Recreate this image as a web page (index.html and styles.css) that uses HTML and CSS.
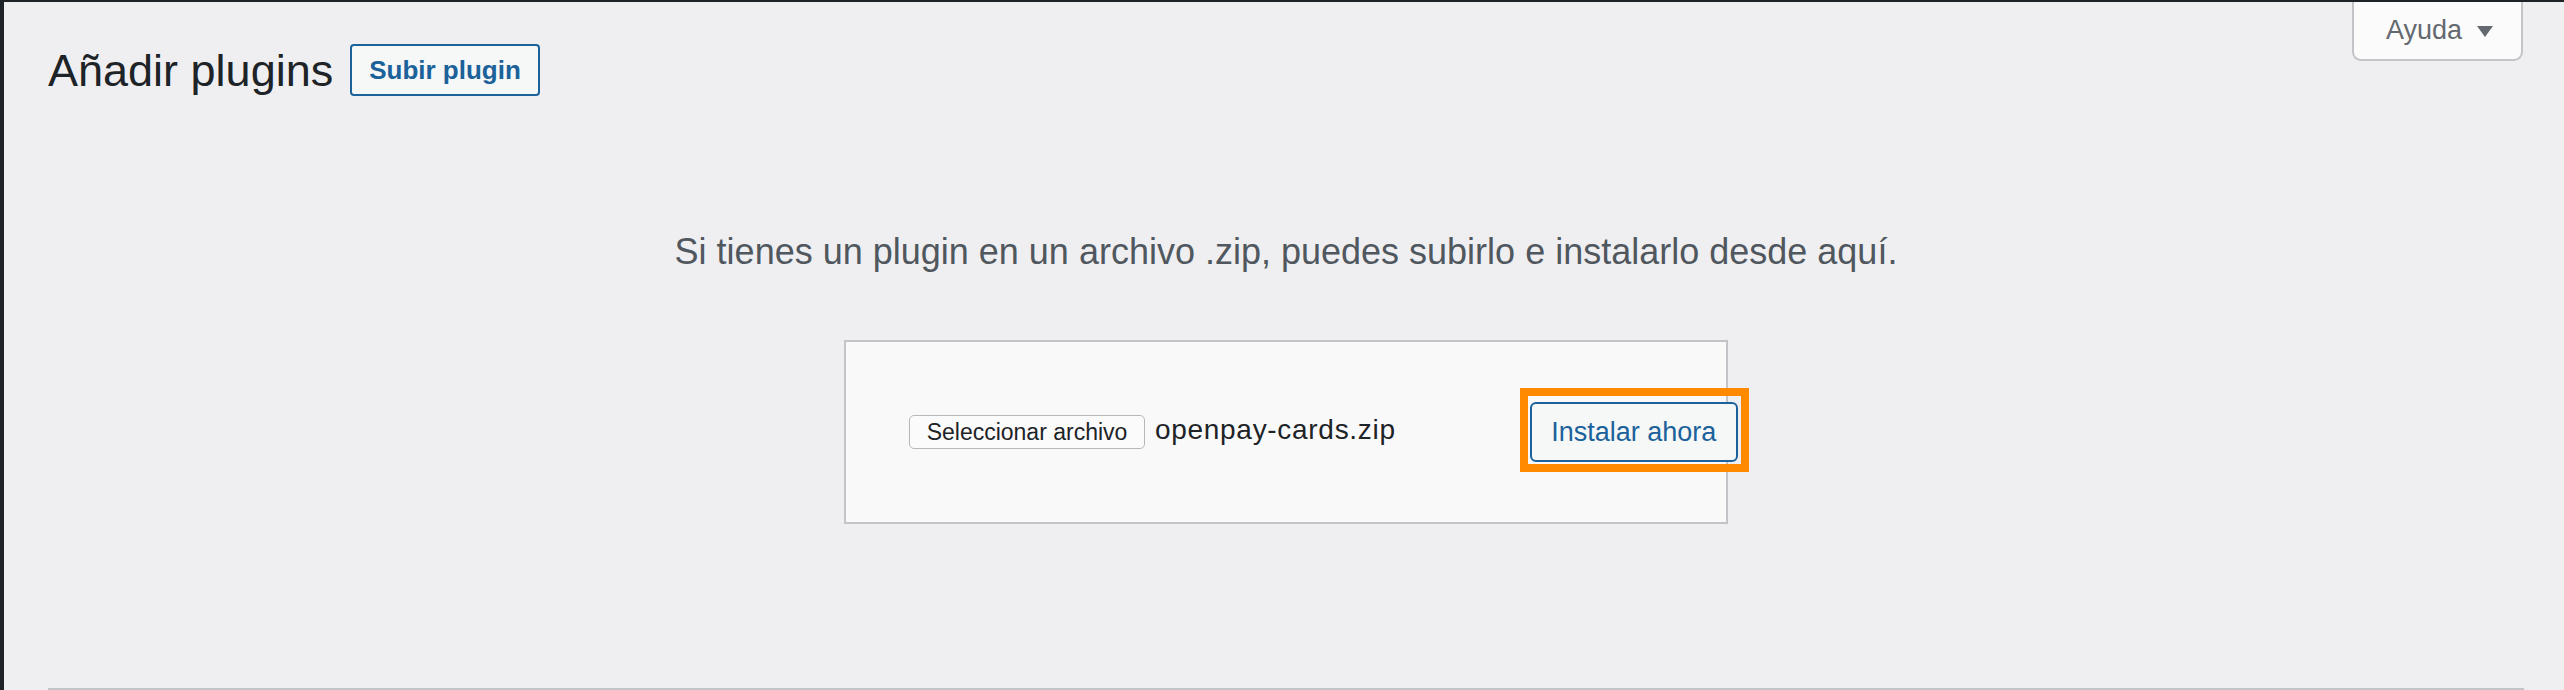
FILE: index.html
```html
<!DOCTYPE html>
<html lang="es">
<head>
<meta charset="utf-8">
<title>Añadir plugins</title>
<link rel="stylesheet" href="styles.css">
</head>
<body>
  <div class="meta-links">
    <button class="help-tab" type="button">Ayuda <span class="tri"></span></button>
  </div>
  <div class="wrap">
    <h1 class="page-title">Añadir plugins <a class="page-title-action" href="#">Subir plugin</a></h1>
    <div class="upload-plugin">
      <p class="install-help">Si tienes un plugin en un archivo .zip, puedes subirlo e instalarlo desde aquí.</p>
      <form class="upload-form">
        <span class="file-btn">Seleccionar archivo</span>
        <span class="file-name">openpay-cards.zip</span>
        <span class="submit-wrap">
          <button class="install-btn" type="button">Instalar ahora</button>
          <span class="highlight"></span>
        </span>
      </form>
    </div>
    <hr class="rule">
  </div>
</body>
</html>
```
FILE: styles.css
```css
html, body {
  margin: 0;
  padding: 0;
}
body {
  width: 2564px;
  height: 690px;
  box-sizing: border-box;
  overflow: hidden;
  background: #efeff1;
  border-top: 2px solid #1d2327;
  border-left: 4px solid #1d2327;
  font-family: "Liberation Sans", Arial, sans-serif;
  color: #1d2327;
}
.meta-links {
  float: right;
  margin-right: 41px;
}
.help-tab {
  box-sizing: border-box;
  width: 171px;
  height: 59px;
  padding: 0 0 0 32px;
  display: flex;
  align-items: center;
  gap: 15px;
  background: #fbfbfb;
  border: 2px solid #c3c4c7;
  border-top: none;
  border-radius: 0 0 9px 9px;
  font-family: inherit;
  font-size: 27px;
  color: #646970;
}
.tri {
  width: 0;
  height: 0;
  border-left: 8px solid transparent;
  border-right: 8px solid transparent;
  border-top: 11px solid #646970;
  margin-top: 2px;
}
.wrap {
  padding: 0 40px 0 44px;
}
.page-title {
  margin: 39px 0 0 0;
  height: 60px;
  display: flex;
  align-items: center;
  gap: 17px;
  font-size: 45px;
  font-weight: 400;
  line-height: 60px;
}
.page-title-action {
  box-sizing: border-box;
  height: 52px;
  padding: 0 17px;
  display: inline-flex;
  align-items: center;
  border: 2px solid #1b629b;
  border-radius: 4px;
  background: #f6f7f7;
  color: #1b629b;
  font-size: 26px;
  font-weight: 700;
  text-decoration: none;
  line-height: 1;
  margin-top: -2px;
}
.upload-plugin {
  display: flex;
  flex-direction: column;
  align-items: center;
}
.install-help {
  margin: 126px 0 0 0;
  font-size: 36px;
  line-height: 50px;
  color: #50575e;
  text-align: center;
}
.upload-form {
  box-sizing: border-box;
  width: 884px;
  height: 184px;
  margin-top: 63px;
  padding-left: 63px;
  display: flex;
  align-items: center;
  background: #f9f9f9;
  border: 2px solid #c3c4c7;
}
.upload-form > * {
  flex: none;
  white-space: nowrap;
}
.file-btn {
  box-sizing: border-box;
  width: 236px;
  height: 34px;
  display: inline-flex;
  align-items: center;
  justify-content: center;
  background: #fbfbfb;
  border: 1px solid #b8b8b8;
  border-radius: 5px;
  font-size: 23px;
  color: #1d2327;
}
.file-name {
  margin-left: 10px;
  margin-top: -4px;
  font-size: 28px;
  letter-spacing: 0.7px;
  color: #1d2327;
}
.submit-wrap {
  position: relative;
  margin-left: 134px;
  display: inline-flex;
}
.install-btn {
  box-sizing: border-box;
  width: 208px;
  height: 60px;
  padding: 0;
  background: #f6f7f7;
  border: 2px solid #1b629b;
  border-radius: 6px;
  font-family: inherit;
  font-size: 27px;
  color: #1b629b;
}
.highlight {
  position: absolute;
  left: -10px;
  top: -14px;
  right: -11px;
  bottom: -10px;
  border: 8px solid #ff8a00;
  pointer-events: none;
}
.rule {
  margin: 164px 0 0 0;
  height: 2px;
  border: none;
  background: #c3c4c7;
}
```
